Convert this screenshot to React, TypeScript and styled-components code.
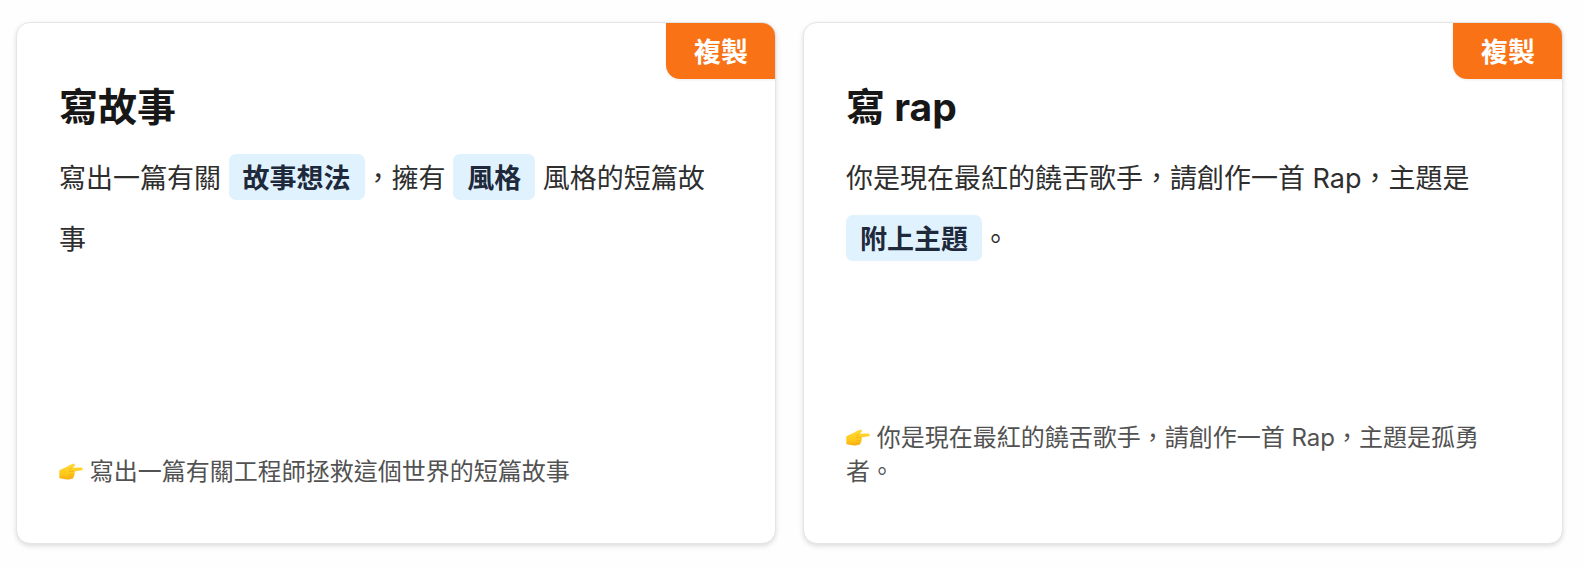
import React from "react";
import styled, { createGlobalStyle } from "styled-components";

const GlobalStyle = createGlobalStyle`
  *, *::before, *::after { box-sizing: border-box; }
  body {
    margin: 0;
    background: #fefefe;
    font-family: Inter, "Noto Sans CJK TC", sans-serif;
    color: #2e2e2e;
  }
`;

const CardGrid = styled.main`
  display: grid;
  grid-template-columns: repeat(2, minmax(0, 1fr));
  gap: 27px;
  padding: 22px 21px 23px 16px;
`;

const Card = styled.article`
  position: relative;
  display: flex;
  flex-direction: column;
  min-height: 522px;
  padding: 60px 48px 54px 42px;
  border: 1px solid #e5e5e5;
  border-radius: 14px;
  background: #fff;
  box-shadow: 0 2px 4px rgba(0, 0, 0, 0.1), 0 2px 8px rgba(0, 0, 0, 0.04);
`;

const CopyButton = styled.button`
  position: absolute;
  top: 0;
  right: 0;
  height: 56px;
  padding: 3px 27px 0 28px;
  border: 0;
  border-radius: 0 13px 0 14px;
  background: #f97316;
  box-shadow: 0 1px 3px rgba(0, 0, 0, 0.08);
  color: #fff;
  font: inherit;
  font-size: 27px;
  font-weight: 600;
  line-height: 53px;
  cursor: pointer;
`;

const Title = styled.h2`
  margin: 0 0 17px;
  color: #171717;
  font-size: 39px;
  font-weight: 700;
  line-height: 48px;
`;

const Prompt = styled.p`
  margin: 0 0 24px;
  font-size: 27px;
  line-height: 61px;
`;

const Slot = styled.span`
  display: inline-block;
  padding: 4px 14px 0;
  border-radius: 7px;
  background: #e0f2fe;
  color: #1e293b;
  font-weight: 600;
  line-height: 42px;
`;

const Example = styled.p`
  margin: auto 0 0;
  color: #525252;
  font-size: 24px;
  line-height: 34px;
`;

const Hand = styled.svg`
  width: 24px;
  height: 24px;
  vertical-align: -4px;
`;

function PointingHand() {
  return (
    <Hand viewBox="0 0 25 24" role="img" aria-label="👉">
      <defs>
        <linearGradient id="skin" x1="0" y1="0" x2="0" y2="1">
          <stop offset="0" stopColor="#ffd93a" />
          <stop offset="0.65" stopColor="#ffc91a" />
          <stop offset="1" stopColor="#f9ac10" />
        </linearGradient>
      </defs>
      <path
        fill="url(#skin)"
        d="M0.2 10.6C1.6 9 4.2 8.3 6.6 7.2C9.3 5.9 12 4.1 14.6 3.4C16.2 3 17.1 4.2 16.4 5.4C15.8 6.3 14.6 7 13.8 7.6L23.2 7.3C25.1 7.2 25.3 10.1 23.5 10.3L15.8 11.5C16.8 12.2 16.8 13.8 15.8 14.4C16.4 15.3 16 16.6 15 17C15.2 18.1 14.5 18.9 13.4 19.1C11.4 20 7.3 20.2 4.8 19.4C3.1 18.9 1.9 18.6 0.4 18.4Z"
      />
      <path
        fill="none"
        stroke="#f0a80e"
        strokeLinecap="round"
        strokeWidth="0.6"
        d="M10.6 11.7C12.2 11 14.2 11.3 15.7 11.6M11 14.6C12.6 14.9 14.2 14.8 15.5 14.5M10.7 17.3C12.2 17.5 13.7 17.4 14.7 17.1M13.8 7.6C12.8 8.4 11.9 9.2 10.6 9.8"
      />
    </Hand>
  );
}

interface PromptCardProps {
  title: string;
  example: string;
  children: React.ReactNode;
}

function PromptCard({ title, example, children }: PromptCardProps) {
  return (
    <Card>
      <CopyButton type="button">複製</CopyButton>
      <Title>{title}</Title>
      <Prompt>{children}</Prompt>
      <Example>
        <PointingHand /> {example}
      </Example>
    </Card>
  );
}

export default function App() {
  return (
    <>
      <GlobalStyle />
      <CardGrid lang="zh-Hant">
        <PromptCard
          title="寫故事"
          example="寫出一篇有關工程師拯救這個世界的短篇故事"
        >
          寫出一篇有關 <Slot>故事想法</Slot>，擁有 <Slot>風格</Slot>{" "}
          風格的短篇故事
        </PromptCard>
        <PromptCard
          title="寫 rap"
          example="你是現在最紅的饒舌歌手，請創作一首 Rap，主題是孤勇者。"
        >
          你是現在最紅的饒舌歌手，請創作一首 Rap，主題是{" "}
          <Slot>附上主題</Slot>。
        </PromptCard>
      </CardGrid>
    </>
  );
}
